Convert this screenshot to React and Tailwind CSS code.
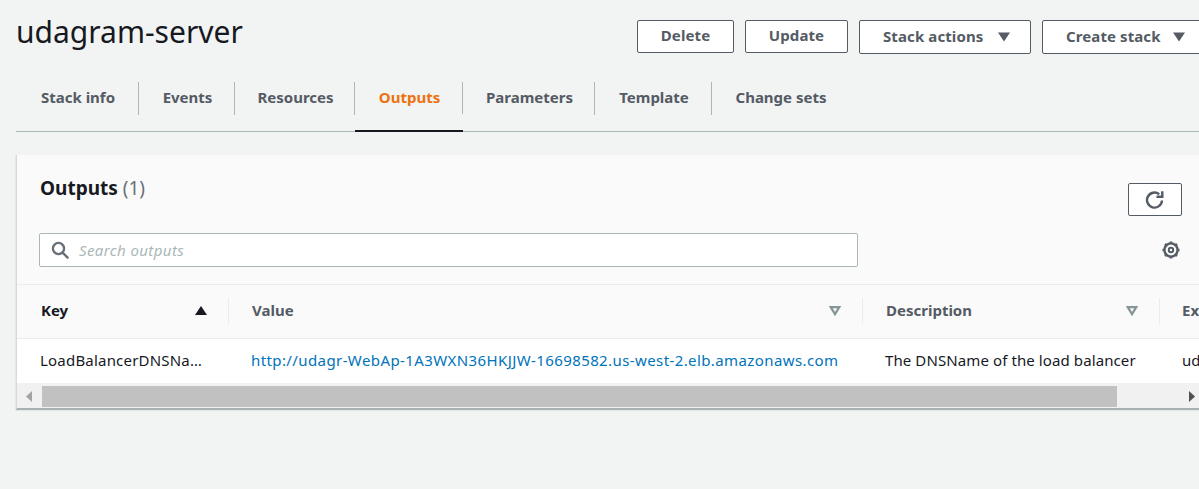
const tabs = [
  { label: "Stack info", width: "w-[123px]" },
  { label: "Events", width: "w-[96px]" },
  { label: "Resources", width: "w-[120px]" },
  { label: "Outputs", width: "w-[108px]", active: true },
  { label: "Parameters", width: "w-[132px]" },
  { label: "Template", width: "w-[117px]" },
  { label: "Change sets", width: "w-[136px]", last: true },
];

function Caret({ className }) {
  return (
    <svg width="14" height="10" viewBox="0 0 14 10" className={className}>
      <path d="M1 0.5h12L7 9.5z" fill="currentColor" />
    </svg>
  );
}

function SortIcon({ up, hollow }) {
  if (hollow) {
    return (
      <svg width="12" height="10" viewBox="0 0 12 10" className="text-[#879596]">
        <path d="M1.700 1.200h8.600L6 8.200z" fill="none" stroke="currentColor" strokeWidth="2.2" />
      </svg>
    );
  }
  return (
    <svg width="12" height="9" viewBox="0 0 12 9" className={up ? "text-[#16191f]" : ""}>
      <path d="M6 0l6 9H0z" fill="currentColor" />
    </svg>
  );
}

function RefreshIcon() {
  return (
    <svg width="20" height="20" viewBox="0 0 20 20" fill="none" stroke="currentColor" strokeWidth="2.4">
      <path d="M17 10.500a7.500 7.500 0 1 1-2.800-6.300" />
      <path d="M11.500 6.700h5.800V1.200" />
    </svg>
  );
}

function SearchIcon() {
  return (
    <svg width="18" height="18" viewBox="0 0 18 18" fill="none" stroke="#687078" strokeWidth="2.4">
      <circle cx="7.500" cy="7.500" r="5.600" />
      <path d="M11.600 11.600l5 5" strokeLinecap="round" />
    </svg>
  );
}

function GearIcon() {
  return (
    <svg width="20" height="20" viewBox="0 0 20 20" fill="none" stroke="#545b64">
      <circle cx="10" cy="10" r="6.600" strokeWidth="2.4" />
      <circle cx="10" cy="10" r="2.200" strokeWidth="2" />
      <path
        d="M10 1.500v2.500M10 16v2.500M1.500 10H4M16 10h2.500M4 4l1.800 1.800M14.200 14.200L16 16M4 16l1.800-1.800M14.200 5.800L16 4"
        strokeWidth="2.600"
      />
    </svg>
  );
}

function Btn({ children, className }) {
  return (
    <button className={`flex shrink-0 items-center justify-center rounded-[2px] border border-[#545b64] bg-white pb-0.5 text-[15px] font-bold tracking-[0.1px] text-[#545b64] ${className}`}>
      {children}
    </button>
  );
}

export default function App() {
  return (
    <div className="h-[489px] w-[1199px] overflow-hidden bg-[#f2f3f3] pl-4 font-['Noto_Sans',sans-serif] text-[15px] text-[#16191f]">
      {/* Header */}
      <div className="flex h-[66px] items-start">
        <h1 className="mt-3 w-[621px] shrink-0 text-[30px] leading-10 font-normal">udagram-server</h1>
        <div className="mt-5 flex shrink-0 items-start gap-[11px]">
          <Btn className="h-[33px] w-[97px]">Delete</Btn>
          <Btn className="h-[33px] w-[103px]">Update</Btn>
          <Btn className="h-[34px] w-[172px] justify-start gap-[14px] pl-[23px]">
            Stack actions <Caret className="mt-0.5 text-[#545b64]" />
          </Btn>
          <Btn className="h-[34px] w-[172px] justify-start gap-[11px] pl-[23px]">
            Create stack <Caret className="mt-0.5 text-[#545b64]" />
          </Btn>
        </div>
      </div>

      {/* Tabs */}
      <div className="flex h-[66px] items-end border-b border-[#aab7b8]">
        {tabs.map((tab) => (
          <div key={tab.label} className={`-mb-px flex h-[50px] shrink-0 flex-col ${tab.width} ${tab.active ? "border-b-2 border-[#16191f]" : ""}`}>
            <div className={`mb-4 flex h-[33px] items-center justify-center pb-0.5 pl-[2px] font-bold ${tab.last ? "" : "border-r border-[#aab7b8]"} ${tab.active ? "text-[#ec7211]" : "text-[#545b64]"}`}>
              {tab.label}
            </div>
          </div>
        ))}
      </div>

      {/* Outputs card */}
      <div className="mt-[23px] w-[1300px] border-l border-[#d5dbdb] bg-white shadow-[0_1px_1px_0_rgba(0,28,36,0.3)]">
        <div className="flex h-[129px] w-[1183px] flex-col bg-[#fafafa] pl-[22px]">
          <div className="flex h-[78px] items-start">
            <h2 className="mt-[18px] w-[1089px] shrink-0 pl-px text-[19px] leading-[30px] font-bold">
              Outputs <span className="font-normal text-[#687078]">(1)</span>
            </h2>
            <button className="mt-7 flex h-[33px] w-[54px] shrink-0 items-center justify-center rounded-[2px] border border-[#545b64] bg-white text-[#545b64]">
              <RefreshIcon />
            </button>
          </div>
          <div className="flex items-center">
            <div className="flex h-[34px] w-[819px] shrink-0 items-center gap-[10px] rounded-[2px] border border-[#aab7b8] bg-white pl-[11px]">
              <SearchIcon />
              <span className="tracking-[0.4px] text-[#aab7b8] italic">Search outputs</span>
            </div>
            <div className="ml-[303px]">
              <GearIcon />
            </div>
          </div>
        </div>

        {/* Table header */}
        <div className="flex h-[55px] items-center border-y border-[#eaeded] bg-[#fafafa] pb-0.5 font-bold text-[#545b64]">
          <div className="flex h-[26px] w-[212px] shrink-0 items-center justify-between border-r border-[#eaeded] pr-[21px] pl-[24px] text-[#16191f]">
            Key <SortIcon up />
          </div>
          <div className="flex h-[26px] w-[634px] shrink-0 items-center justify-between border-r border-[#eaeded] pr-[21px] pl-[23px]">
            Value <SortIcon hollow />
          </div>
          <div className="flex h-[26px] w-[297px] shrink-0 items-center justify-between border-r border-[#eaeded] pr-[21px] pl-[23px]">
            Description <SortIcon hollow />
          </div>
          <div className="pl-[22px]">Export name</div>
        </div>

        {/* Row */}
        <div className="flex h-[44px] items-center bg-white pb-0.5">
          <div className="w-[212px] shrink-0 pl-[23px]">
            <span className="block w-[164px] truncate tracking-[0.2px]">LoadBalancerDNSName</span>
          </div>
          <a className="w-[634px] shrink-0 pl-[22px] tracking-[0.4px] text-[#0073bb]">http://udagr-WebAp-1A3WXN36HKJJW-16698582.us-west-2.elb.amazonaws.com</a>
          <div className="w-[297px] shrink-0 pl-[22px] tracking-[0.1px]">The DNSName of the load balancer</div>
          <div className="pl-[22px]">udagram</div>
        </div>

        {/* Scrollbar */}
        <div className="flex h-[26px] w-[1182px] items-start border-b border-[#a9b0b0] bg-[#f1f1f1] pt-[3px]">
          <div className="flex h-[21px] w-[25px] shrink-0 items-center justify-end pr-[10px]">
            <svg width="6" height="11" viewBox="0 0 6 11" className="text-[#a3a3a3]">
              <path d="M6 0v11L0 5.500z" fill="currentColor" />
            </svg>
          </div>
          <div className="h-[21px] w-[1075px] shrink-0 bg-[#c1c1c1]" />
          <div className="flex h-[21px] grow items-center justify-end pr-[4px]">
            <svg width="6" height="11" viewBox="0 0 6 11" className="text-[#505050]">
              <path d="M0 0v11l6-5.500z" fill="currentColor" />
            </svg>
          </div>
        </div>
      </div>
    </div>
  );
}
